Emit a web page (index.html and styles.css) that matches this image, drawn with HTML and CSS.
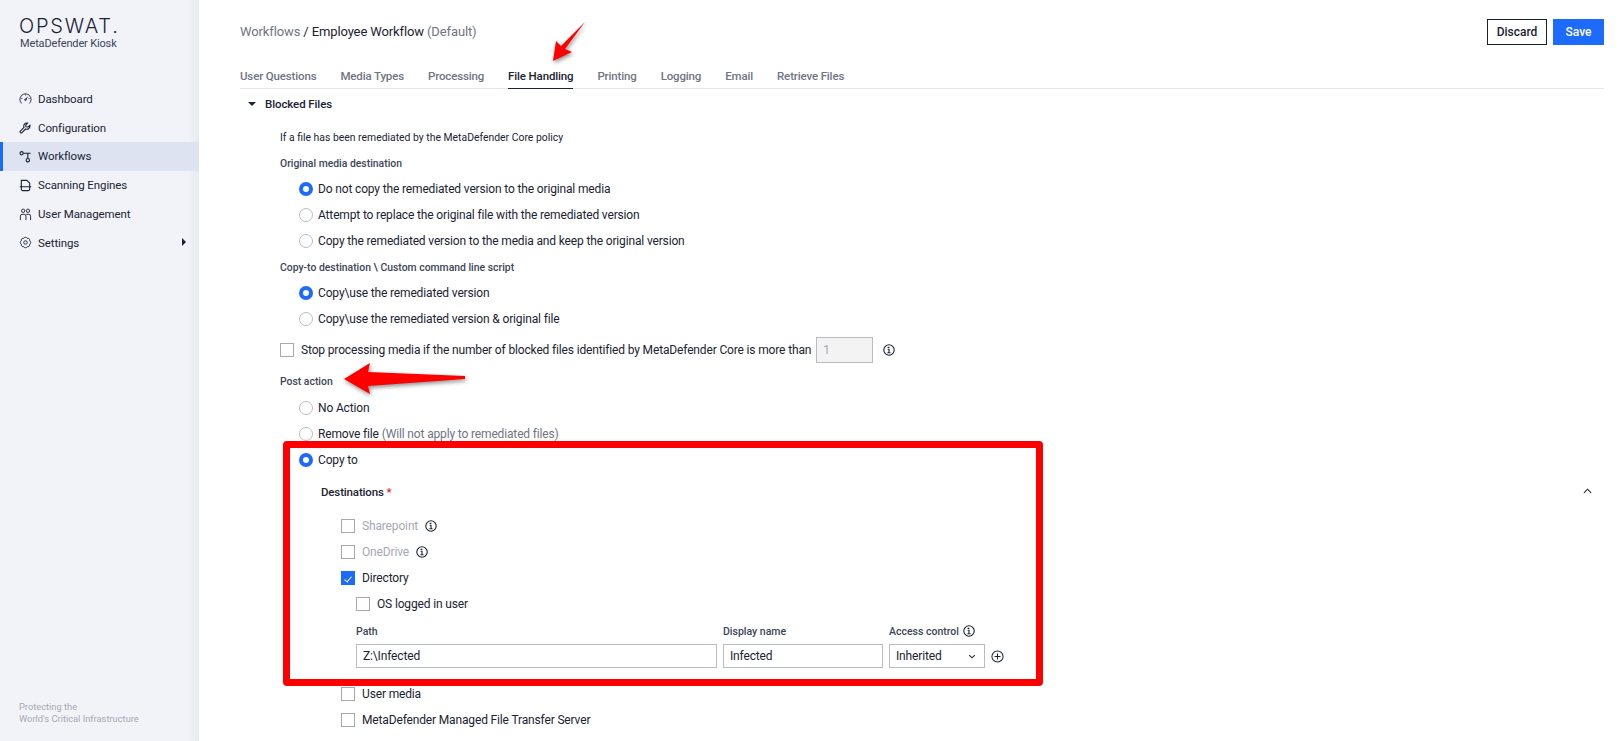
FILE: index.html
```html
<!DOCTYPE html>
<html lang="en">
<head>
    <meta charset="UTF-8">
    <title>MetaDefender Kiosk - Workflows</title>
    <link rel="stylesheet" href="styles.css">
</head>
<body>
    <svg class="defs" width="0" height="0">
        <symbol id="info" viewBox="0 0 12 12">
            <circle cx="6" cy="6" r="5.2" fill="none" stroke="#1b2333" stroke-width="1.100"/>
            <path d="M4.600 3.400h1.800M5.500 3v.8M4.600 5.300h1.400v3.200M4.400 8.700h3.100" fill="none" stroke="#1b2333" stroke-width="1.100"/>
        </symbol>
    </svg>

    <aside class="sidebar">
        <div class="logo">
            <div class="logo-name">OPSWAT.</div>
            <div class="logo-sub">MetaDefender Kiosk</div>
        </div>
        <nav class="nav">
            <a class="nav-item">
                <svg viewBox="0 0 14 14"><path d="M2.800 12.300A6 6 0 1 1 11.200 12.300M7 8.300l2.200-3.100M2.600 7h1M10.400 7h1M7 2.600v1"/><circle cx="7" cy="8.300" r=".9"/></svg>
                Dashboard
            </a>
            <a class="nav-item">
                <svg class="thick" viewBox="0 0 14 14"><path d="M5.400 6.900 1.500 10.800a1.200 1.200 0 0 0 1.700 1.700l3.900-3.900c2.400.9 5.300-1 4.700-4L9.700 6.500 7.500 6.300 7.300 4.200 9.300 2.200C6.300 1.600 4.500 4.500 5.400 6.900Z"/></svg>
                Configuration
            </a>
            <a class="nav-item active">
                <svg class="thick" viewBox="0 0 14 14"><circle cx="2.800" cy="3.500" r="1.700"/><circle cx="9.500" cy="11" r="1.800"/><path d="M4.500 3.500h8M9.500 3.500v5.700"/></svg>
                Workflows
            </a>
            <a class="nav-item">
                <svg class="thick" viewBox="0 0 14 14"><path d="M2.500 8V1.500h6L11.500 4.500V8M.8 8.300h12.400M2.500 8.300V11a1.500 1.500 0 0 0 1.500 1.500h6a1.500 1.500 0 0 0 1.500-1.500V8.300"/></svg>
                Scanning Engines
            </a>
            <a class="nav-item">
                <svg viewBox="0 0 14 14"><circle cx="4.500" cy="3" r="1.800"/><circle cx="9.700" cy="3" r="1.800"/><path d="M1.500 13V8.800a2 2 0 0 1 2-2h2a2 2 0 0 1 2 2V13M7.700 6.800h2.800a2 2 0 0 1 2 2V13"/></svg>
                User Management
            </a>
            <a class="nav-item">
                <svg viewBox="0 0 14 14"><circle cx="7" cy="7" r="1.900"/><path d="M11.430 5.160A2 2 0 0 1 11.430 8.840 2 2 0 0 1 8.840 11.430 2 2 0 0 1 5.160 11.430 2 2 0 0 1 2.570 8.840 2 2 0 0 1 2.570 5.160 2 2 0 0 1 5.160 2.570 2 2 0 0 1 8.840 2.570 2 2 0 0 1 11.430 5.160Z"/></svg>
                Settings
                <span class="nav-caret"></span>
            </a>
        </nav>
        <div class="tagline">Protecting the<br>World's Critical Infrastructure</div>
    </aside>

    <main class="main">
        <header class="top">
            <div class="crumbs"><span class="muted">Workflows</span> / Employee Workflow <span class="muted">(Default)</span></div>
            <div class="actions">
                <button class="btn btn-outline">Discard</button>
                <button class="btn btn-primary">Save</button>
            </div>
        </header>

        <div class="tabs">
            <a class="tab">User Questions</a>
            <a class="tab">Media Types</a>
            <a class="tab">Processing</a>
            <a class="tab active">File Handling</a>
            <a class="tab">Printing</a>
            <a class="tab">Logging</a>
            <a class="tab">Email</a>
            <a class="tab">Retrieve Files</a>
        </div>

        <div class="section-head"><span class="caret-down"></span>Blocked Files</div>

        <section class="section">
            <div class="row small">If a file has been remediated by the MetaDefender Core policy</div>
            <div class="row small heading">Original media destination</div>
            <div class="row indent"><span class="radio on"></span>Do not copy the remediated version to the original media</div>
            <div class="row indent"><span class="radio"></span>Attempt to replace the original file with the remediated version</div>
            <div class="row indent"><span class="radio"></span>Copy the remediated version to the media and keep the original version</div>
            <div class="row small heading">Copy-to destination \ Custom command line script</div>
            <div class="row indent"><span class="radio on"></span>Copy\use the remediated version</div>
            <div class="row indent"><span class="radio"></span>Copy\use the remediated version &amp; original file</div>

            <div class="row stop">
                <span class="check"></span>Stop processing media if the number of blocked files identified by MetaDefender Core is more than
                <input class="field count" type="text" value="1" disabled>
                <svg class="info info-stop"><use href="#info"/></svg>
            </div>

            <div class="row small heading post">Post action</div>
            <div class="row indent no-action"><span class="radio"></span>No Action</div>
            <div class="row indent"><span class="radio"></span>Remove file&nbsp;<span class="muted">(Will not apply to remediated files)</span></div>
            <div class="row indent"><span class="radio on"></span>Copy to</div>

            <div class="destinations">
                <div class="row dest-head">Destinations&nbsp;<span class="req">*</span>
                    <svg class="chevron" viewBox="0 0 10 6"><path d="M1 5l4-4 4 4"/></svg>
                </div>
                <div class="dest-list">
                    <div class="row disabled"><span class="check"></span>Sharepoint<svg class="info"><use href="#info"/></svg></div>
                    <div class="row disabled"><span class="check"></span>OneDrive<svg class="info"><use href="#info"/></svg></div>
                    <div class="row"><span class="check on"></span>Directory</div>
                    <div class="row sub"><span class="check"></span>OS logged in user</div>
                    <div class="path-grid">
                        <label class="path-label">Path</label>
                        <label class="path-label">Display name</label>
                        <label class="path-label">Access control<svg class="info"><use href="#info"/></svg></label>
                        <span></span>
                        <input class="field" type="text" value="Z:\Infected">
                        <input class="field" type="text" value="Infected">
                        <div class="field select">Inherited
                            <svg viewBox="0 0 10 6"><path d="M1.500 1.200 5 4.700l3.500-3.500"/></svg>
                        </div>
                        <svg class="plus" viewBox="0 0 14 14"><circle cx="7" cy="7" r="6"/><path d="M7 3.800v6.400M3.800 7h6.400"/></svg>
                    </div>
                    <div class="row"><span class="check"></span>User media</div>
                    <div class="row"><span class="check"></span>MetaDefender Managed File Transfer Server</div>
                </div>
            </div>
        </section>
    </main>

    <!-- annotations on top of the screenshot -->
    <div class="red-box"></div>
    <svg class="arrows" width="1620" height="741">
        <path d="M553 61 556 41 561 46 585 22 565 49 572 52Z"/>
        <path d="M344 379 370 363 368 372 465 376 465 379 368 386 370 394Z"/>
    </svg>
</body>
</html>
```

FILE: styles.css
```css
* {
    box-sizing: border-box;
}

html, body {
    height: 100%;
}

body {
    margin: 0;
    display: flex;
    overflow: hidden;
    background: #fff;
    color: #1b2333;
    font-family: Roboto, "Liberation Sans", sans-serif;
    font-size: 12px;
    letter-spacing: -.15px;
}

.defs {
    position: absolute;
}

/* sidebar */
.sidebar {
    width: 199px;
    flex-shrink: 0;
    display: flex;
    flex-direction: column;
    background: linear-gradient(to right, #f1f3f9 94%, #e9ebf1);
}

.logo {
    padding: 15px 0 0 19px;
    height: 84.500px;
}

.logo-name {
    font-family: Inter, sans-serif;
    font-size: 20px;
    font-weight: 300;
    line-height: 22px;
    letter-spacing: 1.800px;
}

.logo-sub {
    margin-left: 1px;
    font-size: 11px;
    line-height: 13px;
    color: #3d4557;
    letter-spacing: -.15px;
}

.nav {
    display: flex;
    flex-direction: column;
}

.nav-item {
    display: flex;
    align-items: center;
    gap: 6px;
    height: 28.800px;
    padding-left: 19px;
    position: relative;
    font-size: 11.500px;
    letter-spacing: -.1px;
}

.nav-item svg {
    width: 13px;
    height: 13px;
    fill: none;
    stroke: #1b2333;
    stroke-width: 1;
}

.nav-item svg.thick {
    stroke-width: 1.200;
}

.nav-item.active {
    background: #dde3f1;
    border-left: 3px solid #1d6bfc;
    padding-left: 16px;
}

.nav-caret {
    position: absolute;
    left: 182px;
    top: 10px;
    border-left: 4px solid #1b2333;
    border-top: 4px solid transparent;
    border-bottom: 4px solid transparent;
}

.tagline {
    margin-top: auto;
    padding: 0 0 16px 19px;
    font-size: 9.300px;
    line-height: 12px;
    letter-spacing: 0;
    color: #a5a9b4;
}

/* main column */
.main {
    flex: 1;
    min-width: 0;
    padding: 19px 16px 0 41px;
}

.top {
    display: flex;
    justify-content: space-between;
    align-items: flex-start;
    height: 40px;
}

.crumbs {
    margin-top: 3px;
    font-size: 13px;
    line-height: 20px;
    letter-spacing: -.12px;
}

.muted {
    color: #6f7583;
}

.actions {
    display: flex;
    gap: 6px;
}

.btn {
    height: 26px;
    border: 1px solid #1b2333;
    border-radius: 0;
    font-family: inherit;
    font-size: 12px;
    font-weight: 500;
    letter-spacing: 0;
    padding: 0;
}

.btn-outline {
    width: 60px;
    background: #fff;
    color: #1b2333;
}

.btn-primary {
    width: 51px;
    background: #1d6bfc;
    border-color: #1d6bfc;
    color: #fff;
}

.tabs {
    display: flex;
    gap: 24px;
    height: 30px;
    border-bottom: 1px solid #e5e6e8;
}

.tab {
    height: 30px;
    padding-top: 10px;
    font-size: 11.500px;
    font-weight: 500;
    letter-spacing: -.15px;
    color: #6f7583;
}

.tab.active {
    color: #1b2333;
    border-bottom: 1px solid #1b2333;
}

.section-head {
    display: flex;
    align-items: center;
    height: 29px;
    padding-left: 8px;
    font-size: 11.500px;
    font-weight: 500;
    letter-spacing: -.1px;
}

.caret-down {
    width: 0;
    margin-right: 9px;
    border-top: 4px solid #1b2333;
    border-left: 4px solid transparent;
    border-right: 4px solid transparent;
}

.section {
    padding: 6px 0 0 40px;
}

.row {
    display: flex;
    align-items: center;
    height: 26px;
    white-space: nowrap;
}

.small {
    font-size: 10.400px;
    letter-spacing: 0;
}

.heading {
    font-weight: 500;
    color: #3d4557;
}

.indent {
    padding-left: 19px;
}

.stop {
    margin-top: 5px;
}

.post {
    margin-top: 5px;
}

.no-action {
    margin-top: 1px;
}

.radio {
    width: 14px;
    height: 14px;
    margin-right: 5px;
    border: 1px solid #b9bcc3;
    border-radius: 50%;
    background: #fff;
    flex-shrink: 0;
}

.radio.on {
    border: 4px solid #1d6bfc;
}

.check {
    position: relative;
    width: 14px;
    height: 14px;
    margin-right: 7px;
    border: 1px solid #a6a9b0;
    background: #fff;
    flex-shrink: 0;
}

.check.on {
    background: #1d6bfc;
    border-color: #1d6bfc;
}

.check.on::after {
    content: "";
    position: absolute;
    left: 4px;
    top: 3px;
    width: 3px;
    height: 6px;
    border-right: 1px solid #fff;
    border-bottom: 1px solid #fff;
    transform: rotate(40deg);
}

.field {
    height: 24px;
    border: 1px solid #b9bcc3;
    border-radius: 0;
    padding: 0 6px;
    background: #fff;
    color: #1b2333;
    font: inherit;
    letter-spacing: inherit;
    width: 100%;
}

.count {
    width: 57px;
    height: 26px;
    margin-left: 5px;
    background: #f3f3f3;
    color: #a5a9b4;
}

.info {
    width: 12px;
    height: 12px;
    margin-left: 7px;
    flex-shrink: 0;
}

.info-stop {
    margin-left: 10px;
}

.destinations {
    margin-top: 6px;
    padding-left: 41px;
}

.dest-head {
    position: relative;
    font-size: 11.500px;
    font-weight: 500;
}

.req {
    color: #d9262c;
}

.chevron {
    position: absolute;
    right: 12px;
    top: 9px;
    width: 9px;
    height: 6px;
    fill: none;
    stroke: #1b2333;
    stroke-width: 1.200;
}

.dest-list {
    margin-top: 8px;
    padding-left: 20px;
}

.disabled {
    color: #a5a9b4;
}

.sub {
    padding-left: 15px;
}

.path-grid {
    display: grid;
    grid-template-columns: 361px 160px 96px 20px;
    grid-template-rows: 26px 24px;
    column-gap: 6px;
    align-items: center;
    margin: 1px 0 13px 15px;
    width: 661px;
}

.path-label {
    display: flex;
    align-items: center;
    font-size: 10.500px;
    font-weight: 500;
    letter-spacing: 0;
    color: #3d4557;
}

.path-label .info {
    margin-left: 4px;
}

.select {
    display: flex;
    align-items: center;
    justify-content: space-between;
    padding-right: 8px;
}

.select svg {
    width: 8px;
    height: 5px;
    fill: none;
    stroke: #1b2333;
    stroke-width: 1.300;
}

.plus {
    width: 13px;
    height: 13px;
    fill: none;
    stroke: #1b2333;
    stroke-width: 1.100;
}

/* annotations */
.red-box {
    position: absolute;
    left: 283px;
    top: 441px;
    width: 760px;
    height: 245px;
    border: 7px solid #fe0000;
    border-radius: 4px;
}

.arrows {
    position: absolute;
    left: 0;
    top: 0;
    pointer-events: none;
    fill: #fe0000;
    filter: drop-shadow(1px 2px 2px rgba(0, 0, 0, .45));
}
```
